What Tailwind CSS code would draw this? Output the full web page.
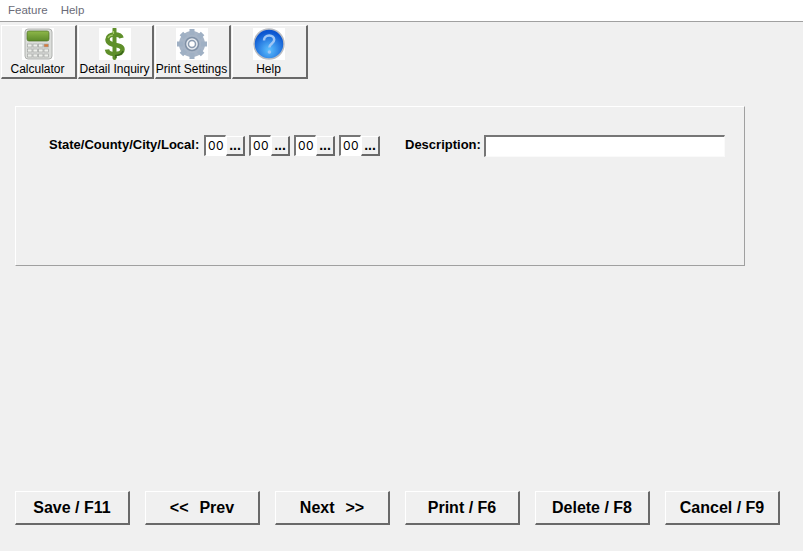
<!DOCTYPE html>
<html>
<head>
<meta charset="utf-8">
<script src="https://cdn.jsdelivr.net/npm/@tailwindcss/browser@4"></script>
</head>
<body class="m-0 bg-[#f0f0f0] font-['Liberation_Sans',sans-serif] text-black">
<div class="flex flex-col w-[803px] h-[551px] overflow-hidden">
  <nav class="flex h-[21px] shrink-0 items-center gap-[13px] bg-white pl-[8px] pt-[1px] text-[11.5px] text-[#6b6b78]">
    <span>Feature</span><span>Help</span>
  </nav>
  <div class="h-[1px] shrink-0 bg-[#a0a0a0]"></div>
  <div class="mt-[3px] flex h-[54px] shrink-0 gap-[1px] pl-[1px]">
    <button class="flex w-[76px] flex-col items-center border-t-1 border-l-1 border-white border-r-2 border-b-2 border-r-[#696969] border-b-[#696969] pt-[2px] pr-[2px] text-[12px] leading-[14px]">
      <svg class="block h-[32px] w-[32px] bg-white" viewBox="0 0 32 32">
        <defs><linearGradient id="s" x1="0" y1="0" x2="0" y2="1"><stop offset="0%" stop-color="#8fb84a"/><stop offset="100%" stop-color="#5c8a2a"/></linearGradient></defs>
        <rect x="3" y="1" width="27" height="30" rx="3" fill="#dcdedb" stroke="#b0b2af"/>
        <rect x="5" y="3" width="22" height="10" rx="2" fill="url(#s)" stroke="#4f7425" stroke-width=".7"/>
        <g fill="#eef0ec" stroke="#a4a6a4" stroke-width=".7">
          <rect x="5.500" y="16" width="4.500" height="3"/><rect x="11" y="16" width="4.500" height="3"/><rect x="16.500" y="16" width="4.500" height="3"/><rect x="22" y="16" width="4.500" height="3" fill="#d97a3a"/>
          <rect x="5.500" y="21" width="4.500" height="3"/><rect x="11" y="21" width="4.500" height="3"/><rect x="16.500" y="21" width="4.500" height="3"/><rect x="22" y="21" width="4.500" height="3"/>
          <rect x="5.500" y="26" width="4.500" height="3"/><rect x="11" y="26" width="4.500" height="3"/><rect x="16.500" y="26" width="4.500" height="3"/><rect x="22" y="26" width="4.500" height="3"/>
        </g>
      </svg>
      <span class="mt-[2px] whitespace-nowrap">Calculator</span>
    </button>
    <button class="flex w-[76px] flex-col items-center border-t-1 border-l-1 border-white border-r-2 border-b-2 border-r-[#696969] border-b-[#696969] pt-[2px] pr-[2px] text-[12px] leading-[14px]">
      <svg class="block h-[32px] w-[32px] bg-white" viewBox="0 0 32 32">
        <path d="M15.500 1v29" stroke="#5f8f2a" stroke-width="4" fill="none" stroke-linecap="round"/>
        <path d="M22.500 10C22 7.500 19.500 6.500 15.500 6.500c-4 0-7 2-7 5 0 7.500 15 3.500 15 10 0 3-3 4.500-8 4.500-4 0-7-1.500-7.500-4.500" stroke="#5f8f2a" stroke-width="4.500" fill="none"/>
        <path d="M14.500 3v3M9 10c1-2 3-3 5-3" stroke="#a5cc66" stroke-width="1.200" fill="none"/>
        <path d="M24 23c-1 3-4 4.500-8 4.500M17 28v2" stroke="#35611a" stroke-width="1.200" fill="none"/>
      </svg>
      <span class="mt-[2px] whitespace-nowrap">Detail Inquiry</span>
    </button>
    <button class="flex w-[76px] flex-col items-center border-t-1 border-l-1 border-white border-r-2 border-b-2 border-r-[#696969] border-b-[#696969] pt-[2px] pr-[2px] text-[12px] leading-[14px]">
      <svg class="block h-[32px] w-[32px] bg-white" viewBox="0 0 32 32">
        <circle cx="16" cy="16" r="9.500" fill="none" stroke="#a6b4c6" stroke-width="7"/>
        <path d="M16 1v6M16 25v6M1 16h6M25 16h6M5.400 5.400l4 4M22.600 22.600l4 4M5.400 26.600l4-4M22.600 9.400l4-4" stroke="#9fb0c4" stroke-width="5"/>
        <circle cx="16" cy="16" r="6.500" fill="#e8ecf1" stroke="#7f90a6" stroke-width="1.500"/>
        <circle cx="16" cy="16" r="3.500" fill="#fff" stroke="#8b9bb0" stroke-width="1.500"/>
      </svg>
      <span class="mt-[2px] whitespace-nowrap">Print Settings</span>
    </button>
    <button class="flex w-[76px] flex-col items-center border-t-1 border-l-1 border-white border-r-2 border-b-2 border-r-[#696969] border-b-[#696969] pt-[2px] pr-[2px] text-[12px] leading-[14px]">
      <svg class="block h-[32px] w-[32px] bg-white" viewBox="0 0 32 32">
        <defs><radialGradient id="h" cx="50%" cy="70%" r="60%"><stop offset="0%" stop-color="#5cc0ff"/><stop offset="100%" stop-color="#0b55d0"/></radialGradient></defs>
        <circle cx="16" cy="16" r="15" fill="url(#h)" stroke="#b9bcc2" stroke-width="1.500"/>
        <path d="M11 12.500c0-3 2.200-5 5.200-5s5 1.800 5 4.300c0 3.700-4.800 3.700-4.800 7.700" fill="none" stroke="#9fc6f5" stroke-width="2.500"/>
        <circle cx="16.400" cy="24" r="1.800" fill="#9fc6f5"/>
      </svg>
      <span class="mt-[2px] whitespace-nowrap">Help</span>
    </button>
  </div>
  <section class="ml-[15px] mt-[27px] flex h-[160px] w-[730px] shrink-0 items-start border-t-1 border-l-1 border-white border-r-1 border-b-1 border-r-[#a0a0a0] border-b-[#a0a0a0] pl-[33px] pt-[28px]">
    <label class="mr-[4px] mt-[2px] w-[151px] whitespace-nowrap text-[13px] font-bold leading-[16px]">State/County/City/Local:</label>
    <div class="flex h-[22px] w-[45px] shrink-0 items-start">
      <span class="flex h-[21px] w-[22px] items-center border-t-2 border-l-2 border-[#767676] bg-white pl-[2px] font-['Inter',sans-serif] text-[12px] tracking-[0.5px] border-r-1 border-b-1 border-r-white border-b-white">00</span>
      <button class="mt-[1px] h-[20px] w-[19px] border-r-2 border-b-2 border-r-[#696969] border-b-[#696969] border-t-1 border-l-1 border-white bg-[#f0f0f0] text-[14px] font-bold leading-[15px]">...</button>
    </div>
    <div class="flex h-[22px] w-[45px] shrink-0 items-start">
      <span class="flex h-[21px] w-[22px] items-center border-t-2 border-l-2 border-[#767676] bg-white pl-[2px] font-['Inter',sans-serif] text-[12px] tracking-[0.5px] border-r-1 border-b-1 border-r-white border-b-white">00</span>
      <button class="mt-[1px] h-[20px] w-[19px] border-r-2 border-b-2 border-r-[#696969] border-b-[#696969] border-t-1 border-l-1 border-white bg-[#f0f0f0] text-[14px] font-bold leading-[15px]">...</button>
    </div>
    <div class="flex h-[22px] w-[45px] shrink-0 items-start">
      <span class="flex h-[21px] w-[22px] items-center border-t-2 border-l-2 border-[#767676] bg-white pl-[2px] font-['Inter',sans-serif] text-[12px] tracking-[0.5px] border-r-1 border-b-1 border-r-white border-b-white">00</span>
      <button class="mt-[1px] h-[20px] w-[19px] border-r-2 border-b-2 border-r-[#696969] border-b-[#696969] border-t-1 border-l-1 border-white bg-[#f0f0f0] text-[14px] font-bold leading-[15px]">...</button>
    </div>
    <div class="flex h-[22px] w-[42px] shrink-0 items-start">
      <span class="flex h-[21px] w-[22px] items-center border-t-2 border-l-2 border-[#767676] bg-white pl-[2px] font-['Inter',sans-serif] text-[12px] tracking-[0.5px] border-r-1 border-b-1 border-r-white border-b-white">00</span>
      <button class="mt-[1px] h-[20px] w-[19px] border-r-2 border-b-2 border-r-[#696969] border-b-[#696969] border-t-1 border-l-1 border-white bg-[#f0f0f0] text-[14px] font-bold leading-[15px]">...</button>
    </div>
    <label class="ml-[24px] mt-[2px] w-[79px] whitespace-nowrap text-[13px] font-bold leading-[16px]">Description:</label>
    <div class="h-[22px] w-[241px] border-t-2 border-l-2 border-[#767676] border-r-1 border-b-1 border-r-[#fafafa] border-b-[#fafafa] bg-white"></div>
  </section>
  <div class="mt-[225px] flex gap-[15px] pl-[15px]">
    <button class="h-[34px] w-[115px] border-t-1 border-l-1 border-white border-r-2 border-b-2 border-r-[#696969] border-b-[#696969] text-[16px] font-bold">Save / F11</button>
    <button class="h-[34px] w-[115px] border-t-1 border-l-1 border-white border-r-2 border-b-2 border-r-[#696969] border-b-[#696969] text-[16px] font-bold whitespace-pre [word-spacing:1px]">&lt;&lt;  Prev</button>
    <button class="h-[34px] w-[115px] border-t-1 border-l-1 border-white border-r-2 border-b-2 border-r-[#696969] border-b-[#696969] text-[16px] font-bold whitespace-pre [word-spacing:1px]">Next  &gt;&gt;</button>
    <button class="h-[34px] w-[115px] border-t-1 border-l-1 border-white border-r-2 border-b-2 border-r-[#696969] border-b-[#696969] text-[16px] font-bold">Print / F6</button>
    <button class="h-[34px] w-[115px] border-t-1 border-l-1 border-white border-r-2 border-b-2 border-r-[#696969] border-b-[#696969] text-[16px] font-bold">Delete / F8</button>
    <button class="h-[34px] w-[115px] border-t-1 border-l-1 border-white border-r-2 border-b-2 border-r-[#696969] border-b-[#696969] text-[16px] font-bold">Cancel / F9</button>
  </div>
</div>
</body>
</html>
